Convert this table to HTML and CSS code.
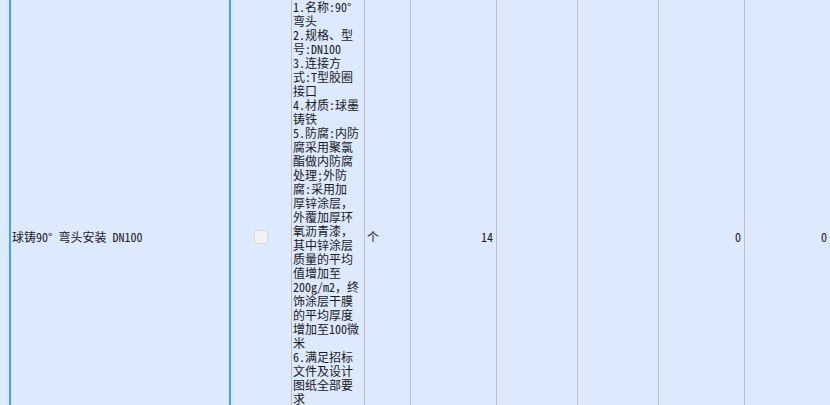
FILE: index.html
```html
<!DOCTYPE html>
<html>
<head>
<meta charset="utf-8">
<link rel="stylesheet" href="styles.css">
</head>
<body>
<div class="row">
  <div class="cell c-pre"></div>
  <div class="cell c-name">球铸90° 弯头安装 DN100</div>
  <div class="cell c-chk"><span class="chk"></span></div>
  <div class="cell c-desc">1.名称:90°<br>弯头<br>2.规格、型<br>号:DN100<br>3.连接方<br>式:T型胶圈<br>接口<br>4.材质:球墨<br>铸铁<br>5.防腐:内防<br>腐采用聚氯<br>酯做内防腐<br>处理;外防<br>腐:采用加<br>厚锌涂层，<br>外覆加厚环<br>氧沥青漆，<br>其中锌涂层<br>质量的平均<br>值增加至<br>200g/m2，终<br>饰涂层干膜<br>的平均厚度<br>增加至100微<br>米<br>6.满足招标<br>文件及设计<br>图纸全部要<br>求</div>
  <div class="cell c-unit">个</div>
  <div class="cell c-num c-qty">14</div>
  <div class="cell c-num c-a"></div>
  <div class="cell c-num c-b"></div>
  <div class="cell c-num c-c">0</div>
  <div class="cell c-num c-d">0</div>
</div>
</body>
</html>
```

FILE: styles.css
```css
html, body {
  margin: 0;
  padding: 0;
  background: #dde9fd;
  overflow: hidden;
  width: 830px;
  height: 405px;
}
.row {
  display: flex;
  height: 474px;
  font-family: "Noto Sans Mono CJK SC", "Noto Sans CJK SC", monospace;
  font-size: 12px;
  line-height: 14px;
  color: #1a1a1a;
}
.cell {
  flex: none;
  box-sizing: border-box;
  display: flex;
  align-items: center;
  white-space: nowrap;
  overflow: hidden;
  border-right: 1px solid #bfbfbf;
}
.c-pre {
  width: 9px;
  border-right: none;
}
.c-name {
  width: 222px;
  border-left: 2px solid #409eff;
  border-right: 2px solid #409eff;
  padding-left: 1px;
}
.c-chk {
  width: 61px;
  justify-content: center;
  padding-right: 1px;
}
.chk {
  display: block;
  width: 14px;
  height: 14px;
  box-sizing: border-box;
  border: 1px solid #d6d6d6;
  border-radius: 2px;
  background: #f2f2f2;
}
.c-desc {
  width: 73px;
  display: block;
  padding-left: 1px;
}
.c-unit {
  width: 46px;
  padding-left: 2px;
}
.c-num {
  justify-content: flex-end;
  padding-right: 3px;
}
.c-qty { width: 86px; }
.c-a { width: 81px; }
.c-b { width: 81px; }
.c-c { width: 86px; }
.c-d { width: 86px; }
```
